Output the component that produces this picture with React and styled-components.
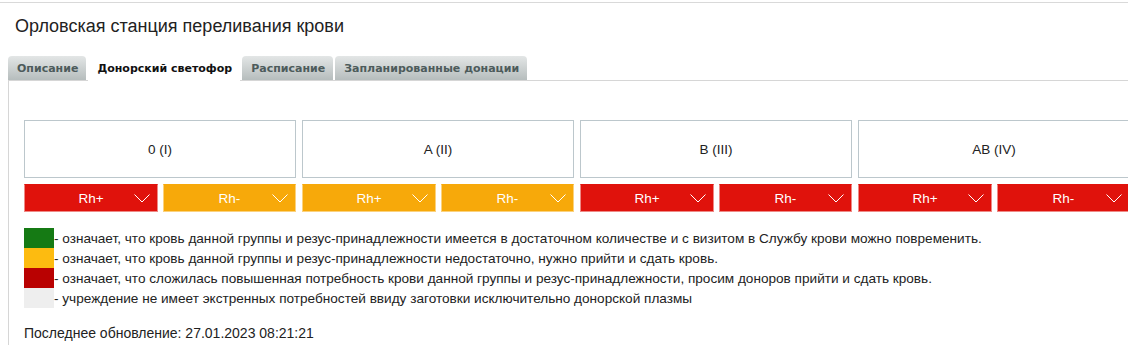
import styled, { createGlobalStyle } from 'styled-components';

const GlobalStyle = createGlobalStyle`
  html, body {
    margin: 0;
    padding: 0;
    background: #fff;
  }
  body {
    font-family: 'Liberation Sans', Arial, sans-serif;
    color: #222;
    overflow: hidden;
  }
`;

const groups = [
  { name: '0 (I)', plus: 'red', minus: 'orange' },
  { name: 'A (II)', plus: 'orange', minus: 'orange' },
  { name: 'B (III)', plus: 'red', minus: 'red' },
  { name: 'AB (IV)', plus: 'red', minus: 'red' },
];

const tabs = ['Описание', 'Донорский светофор', 'Расписание', 'Запланированные донации'];

const legend = [
  {
    color: '#157a14',
    text: '- означает, что кровь данной группы и резус-принадлежности имеется в достаточном количестве и с визитом в Службу крови можно повременить.',
  },
  {
    color: '#fdbb10',
    text: '- означает, что кровь данной группы и резус-принадлежности недостаточно, нужно прийти и сдать кровь.',
  },
  {
    color: '#b90101',
    text: '- означает, что сложилась повышенная потребность крови данной группы и резус-принадлежности, просим доноров прийти и сдать кровь.',
  },
  {
    color: '#eeeeee',
    text: '- учреждение не имеет экстренных потребностей ввиду заготовки исключительно донорской плазмы',
  },
];

const levelColors = {
  red: { bg: '#e0120c', edge: '#ee8a86' },
  orange: { bg: '#f7a90a', edge: '#fbd27e' },
};

const Chevron = () => (
  <svg width='16' height='9' viewBox='0 0 16 9'>
    <path d='M0.5 0.5 L8 8 L15.5 0.5' fill='none' stroke='#fff' strokeWidth='1' />
  </svg>
);

export default function App() {
  return (
    <Page>
      <GlobalStyle />
      <Title>Орловская станция переливания крови</Title>
      <TabList>
        {tabs.map((t, i) => (
          <Tab key={t} $active={i === 1}>
            {t}
          </Tab>
        ))}
      </TabList>
      <Pane>
        <Groups>
          {groups.map((g) => (
            <Group key={g.name}>
              <GroupName>{g.name}</GroupName>
              <RhRow>
                <RhButton $level={g.plus}>
                  <span>Rh+</span>
                  <Chevron />
                </RhButton>
                <RhButton $level={g.minus}>
                  <span>Rh-</span>
                  <Chevron />
                </RhButton>
              </RhRow>
            </Group>
          ))}
        </Groups>
        <Legend>
          {legend.map((l) => (
            <LegendRow key={l.color}>
              <Swatch $color={l.color} />
              <span>{l.text}</span>
            </LegendRow>
          ))}
        </Legend>
        <Updated>Последнее обновление: 27.01.2023 08:21:21</Updated>
      </Pane>
    </Page>
  );
}

const Page = styled.div`
  width: 1128px;
  height: 345px;
  padding-top: 2px;
  box-sizing: border-box;
  overflow: hidden;
`;

const Title = styled.h1`
  margin: 0;
  border-top: 1px solid #d9d9d9;
  padding: 12px 0 0 15px;
  height: 42px;
  box-sizing: border-box;
  font-size: 18px;
  font-weight: normal;
  line-height: 22px;
  color: #222;
`;

const TabList = styled.div`
  display: flex;
  align-items: flex-end;
  gap: 2px;
  margin-left: 8px;
  margin-top: 12px;
  position: relative;
  z-index: 1;
`;

const Tab = styled.div`
  line-height: 25px;
  padding: 0 8px 0 9px;
  border-radius: 4px 4px 0 0;
  font-family: Tahoma, 'DejaVu Sans', Verdana, sans-serif;
  font-size: 11px;
  font-weight: bold;
  color: ${({ $active }) => ($active ? '#111' : '#4d5b5b')};
  background: ${({ $active }) =>
    $active ? '#fff' : 'linear-gradient(#e3e6e6, #b6bdbd)'};
  margin-bottom: ${({ $active }) => ($active ? '-1px' : '0')};
  height: ${({ $active }) => ($active ? '25px' : '24px')};
  white-space: nowrap;
`;

const Pane = styled.div`
  margin-left: 8px;
  border-top: 1px solid #d6d6d6;
  border-left: 1px solid #d6d6d6;
  padding: 39px 0 0 15px;
  height: 300px;
`;

const Groups = styled.div`
  display: grid;
  grid-template-columns: repeat(4, 272px);
  column-gap: 6px;
`;

const Group = styled.div`
  display: flex;
  flex-direction: column;
  gap: 6px;
`;

const GroupName = styled.div`
  height: 58px;
  box-sizing: border-box;
  border: 1px solid #bcc7cc;
  display: flex;
  align-items: center;
  justify-content: center;
  font-size: 13.5px;
  color: #222;
`;

const RhRow = styled.div`
  display: grid;
  grid-template-columns: 134px 133px;
  column-gap: 5px;
`;

const RhButton = styled.div`
  height: 28px;
  box-sizing: border-box;
  border: 1px solid ${({ $level }) => levelColors[$level].edge};
  border-top-color: ${({ $level }) => levelColors[$level].bg};
  background: ${({ $level }) => levelColors[$level].bg};
  color: #fff;
  font-size: 13.5px;
  display: flex;
  align-items: center;
  justify-content: flex-end;
  gap: 22px;
  padding-right: 7px;
  span {
    flex: 1;
    text-align: center;
    padding-left: 45px;
  }
  svg {
    margin-top: 1px;
  }
`;

const Legend = styled.div`
  margin-top: 16px;
  display: flex;
  flex-direction: column;
`;

const LegendRow = styled.div`
  display: flex;
  align-items: center;
  height: 20px;
  font-size: 13.6px;
  color: #222;
  white-space: nowrap;
`;

const Swatch = styled.div`
  width: 30px;
  height: 20px;
  background: ${({ $color }) => $color};
`;

const Updated = styled.div`
  margin-top: 17px;
  font-size: 14px;
  line-height: 16px;
  color: #222;
`;
